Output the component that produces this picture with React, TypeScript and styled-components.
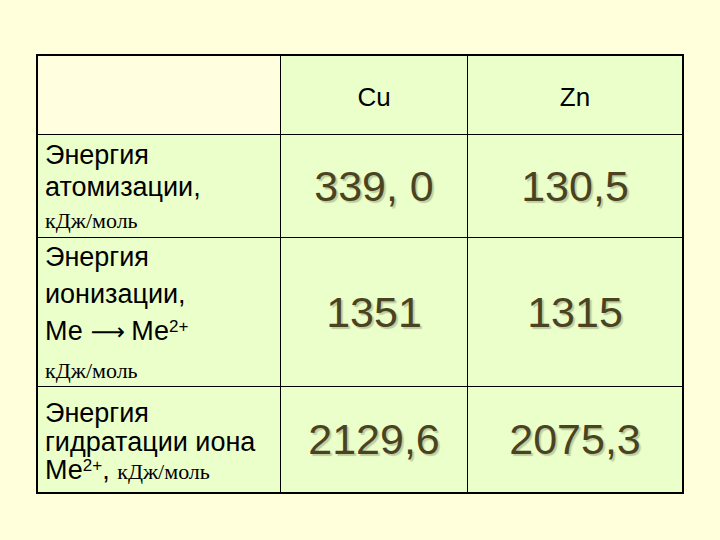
import React from "react";
import styled, { createGlobalStyle } from "styled-components";

const GlobalStyle = createGlobalStyle`
  html, body {
    margin: 0;
    padding: 0;
    background: #ffffdc;
  }
  body {
    width: 720px;
    height: 540px;
    overflow: hidden;
    font-family: "Liberation Sans", Arial, sans-serif;
    color: #000;
  }
`;

const Page = styled.div`
  padding: 54px 0 0 36px;
`;

const Table = styled.div`
  display: grid;
  grid-template-columns: 242px 186px 214px;
  grid-template-rows: 78px 102px 148px 105px;
  gap: 1px;
  width: 644px;
  background: #000;
  border: 2px solid #000;
`;

const Corner = styled.div`
  background: #ffffe0;
`;

const HeadCell = styled.div`
  display: flex;
  align-items: center;
  justify-content: center;
  padding-top: 4px;
  background: #ebffca;
  font-size: 26px;
`;

const LabelCell = styled.div<{ $lh: number; $top: number }>`
  background: #ebffca;
  padding: ${(p) => p.$top}px 0 0 7px;
  font-size: 27px;
  line-height: ${(p) => p.$lh}px;
  white-space: nowrap;
`;

const Line = styled.div``;

const Unit = styled.span`
  font-family: "Liberation Serif", "Times New Roman", serif;
  font-size: 22px;
`;

const Arrow = styled.span`
  font-family: "DejaVu Sans", sans-serif;
  font-size: 24px;
  margin: 0 6px 0 8px;
`;

const Sup = styled.span`
  position: relative;
  top: -0.45em;
  font-size: 17px;
  line-height: 0;
`;

const ValueCell = styled.div`
  display: flex;
  align-items: center;
  justify-content: center;
  background: #ebffca;
  font-size: 43px;
  color: #4a4322;
  text-shadow: 2px 2px 1px rgba(90, 90, 60, 0.3);
`;

const rows = [
  { cu: "339, 0", zn: "130,5" },
  { cu: "1351", zn: "1315" },
  { cu: "2129,6", zn: "2075,3" },
];

export default function App() {
  return (
    <>
      <GlobalStyle />
      <Page>
        <Table>
          <Corner />
          <HeadCell>Cu</HeadCell>
          <HeadCell>Zn</HeadCell>

          <LabelCell $lh={32} $top={4}>
            <Line>Энергия</Line>
            <Line>атомизации,</Line>
            <Line>
              <Unit>кДж/моль</Unit>
            </Line>
          </LabelCell>
          <ValueCell>{rows[0].cu}</ValueCell>
          <ValueCell>{rows[0].zn}</ValueCell>

          <LabelCell $lh={37} $top={1}>
            <Line>Энергия</Line>
            <Line>ионизации,</Line>
            <Line>
              Ме<Arrow>⟶</Arrow>Ме<Sup>2+</Sup>
            </Line>
            <Line>
              <Unit>кДж/моль</Unit>
            </Line>
          </LabelCell>
          <ValueCell>{rows[1].cu}</ValueCell>
          <ValueCell>{rows[1].zn}</ValueCell>

          <LabelCell $lh={28.5} $top={12}>
            <Line>Энергия</Line>
            <Line>гидратации иона</Line>
            <Line>
              Ме<Sup>2+</Sup>, <Unit>кДж/моль</Unit>
            </Line>
          </LabelCell>
          <ValueCell>{rows[2].cu}</ValueCell>
          <ValueCell>{rows[2].zn}</ValueCell>
        </Table>
      </Page>
    </>
  );
}
